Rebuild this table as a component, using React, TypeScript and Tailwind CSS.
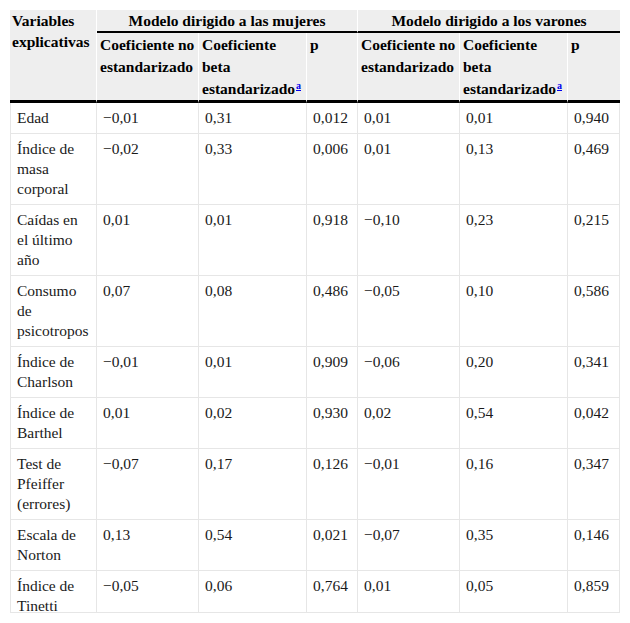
import React from 'react'

type Row = {
  label: string[]
  m: [string, string, string]
  v: [string, string, string]
}

const rows: Row[] = [
  { label: ['Edad'], m: ['−0,01', '0,31', '0,012'], v: ['0,01', '0,01', '0,940'] },
  { label: ['Índice de', 'masa', 'corporal'], m: ['−0,02', '0,33', '0,006'], v: ['0,01', '0,13', '0,469'] },
  { label: ['Caídas en', 'el último', 'año'], m: ['0,01', '0,01', '0,918'], v: ['−0,10', '0,23', '0,215'] },
  { label: ['Consumo', 'de', 'psicotropos'], m: ['0,07', '0,08', '0,486'], v: ['−0,05', '0,10', '0,586'] },
  { label: ['Índice de', 'Charlson'], m: ['−0,01', '0,01', '0,909'], v: ['−0,06', '0,20', '0,341'] },
  { label: ['Índice de', 'Barthel'], m: ['0,01', '0,02', '0,930'], v: ['0,02', '0,54', '0,042'] },
  { label: ['Test de', 'Pfeiffer', '(errores)'], m: ['−0,07', '0,17', '0,126'], v: ['−0,01', '0,16', '0,347'] },
  { label: ['Escala de', 'Norton'], m: ['0,13', '0,54', '0,021'], v: ['−0,07', '0,35', '0,146'] },
  { label: ['Índice de', 'Tinetti'], m: ['−0,05', '0,06', '0,764'], v: ['0,01', '0,05', '0,859'] },
]

const td = 'align-top whitespace-nowrap pl-[6px] pr-[2px] py-[5px] border-r border-b border-[#e6e6e6]'
const thSub =
  'align-top text-left font-bold whitespace-nowrap px-[3px] pt-px pb-0 border-r border-white border-b-[3px] border-b-black'
const thLast =
  'align-top text-left font-bold px-[3px] pt-px pb-0 border-b-[3px] border-b-black'

function Lines({ items }: { items: string[] }) {
  return (
    <>
      {items.map((t, i) => (
        <React.Fragment key={i}>
          {i > 0 && <br />}
          {t}
        </React.Fragment>
      ))}
    </>
  )
}

function BetaHead() {
  return (
    <th className={thSub}>
      Coeficiente
      <br />
      beta
      <br />
      estandarizado
      <sup className="text-[10px] text-[#0000ee] underline ml-px">a</sup>
    </th>
  )
}

function NoStdHead() {
  return (
    <th className={thSub}>
      Coeficiente no
      <br />
      estandarizado
    </th>
  )
}

export default function App() {
  return (
    <div className="bg-white w-[630px] h-[623px] pt-[10px] px-[10px] font-['Liberation_Serif','Times_New_Roman',serif]">
      <div className="h-[603px] overflow-hidden border-b border-[#e6e6e6]">
        <table className="table-fixed border-separate border-spacing-0 w-[610px] text-[15.5px] text-[#1a1a1a]">
          <colgroup>
            <col className="w-[87px]" />
            <col className="w-[102px]" />
            <col className="w-[108px]" />
            <col className="w-[51px]" />
            <col className="w-[102px]" />
            <col className="w-[108px]" />
            <col className="w-[52px]" />
          </colgroup>
          <thead className="bg-[#eeeeee] text-black leading-[21px]">
            <tr>
              <th
                rowSpan={2}
                className="align-top text-left font-bold whitespace-nowrap px-[2px] pt-0 border-r border-white border-b-[3px] border-b-black"
              >
                Variables
                <br />
                explicativas
              </th>
              <th
                colSpan={3}
                className="text-center font-bold h-[22px] pt-0 border-r border-white border-b-2 border-b-black"
              >
                Modelo dirigido a las mujeres
              </th>
              <th
                colSpan={3}
                className="text-center font-bold h-[22px] pt-0 border-b-2 border-b-black"
              >
                Modelo dirigido a los varones
              </th>
            </tr>
            <tr className="leading-[22px]">
              <NoStdHead />
              <BetaHead />
              <th className={thSub}>p</th>
              <NoStdHead />
              <BetaHead />
              <th className={thLast}>p</th>
            </tr>
          </thead>
          <tbody className="leading-[20px]">
            {rows.map((r) => (
              <tr key={r.label.join(' ')}>
                <td className={`${td} border-l`}>
                  <Lines items={r.label} />
                </td>
                {[...r.m, ...r.v].map((c, i) => (
                  <td key={i} className={td}>
                    {c}
                  </td>
                ))}
              </tr>
            ))}
          </tbody>
        </table>
      </div>
    </div>
  )
}
